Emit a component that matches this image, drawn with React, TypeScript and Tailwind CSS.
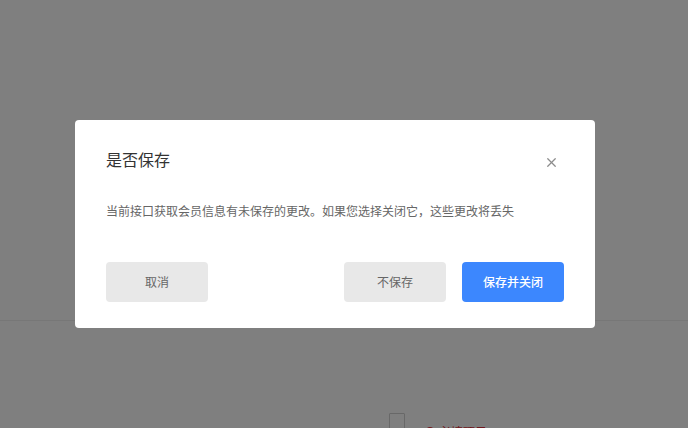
import { X } from "lucide-react";

const font = { fontFamily: '"Noto Sans CJK SC", "Noto Sans", sans-serif' };

const SaveDialog = () => {
  return (
    <div className="w-[520px] rounded-[4px] bg-white px-[31px] pt-[25px] pb-[26px]">
      {/* Header */}
      <div className="flex items-center justify-between">
        <h2 className="text-[16px] leading-[28px] text-[#333333]">是否保存</h2>
        <button className="mt-[6px] mr-[5px] flex h-[15px] w-[15px] items-center justify-center text-[#8c8c8c]">
          <X className="h-[15px] w-[15px]" strokeWidth={2} />
        </button>
      </div>

      {/* Body */}
      <p className="mt-[29px] text-[12px] leading-[18px] text-[#666666]">
        当前接口获取会员信息有未保存的更改。如果您选择关闭它，这些更改将丢失
      </p>

      {/* Footer */}
      <div className="mt-[42px] flex items-center justify-between">
        <button className="h-[40px] w-[102px] rounded-[4px] bg-[#e8e8e8] text-[12px] text-[#666666]">
          取消
        </button>
        <div className="flex gap-[16px]">
          <button className="h-[40px] w-[102px] rounded-[4px] bg-[#e8e8e8] text-[12px] text-[#666666]">
            不保存
          </button>
          <button className="h-[40px] w-[102px] rounded-[4px] bg-[#3c87fe] text-[12px] font-medium text-white">
            保存并关闭
          </button>
        </div>
      </div>
    </div>
  );
};

export default function App() {
  return (
    <div className="relative h-[428px] w-[688px] overflow-hidden bg-white" style={font}>
      {/* Page behind the overlay */}
      <div className="flex flex-col">
        <div className="h-[321px] border-b border-[#eeeeee]" />
        <div className="flex items-start pl-[389px] pt-[92px]">
          <div className="h-[16px] w-[16px] rounded-[1px] border border-[#d0d0d0]" />
          <div className="ml-[20px] mt-[10px] flex items-center gap-[4px] text-[12px] text-[#e0303a]">
            <span className="h-[10px] w-[10px] rounded-full bg-[#e0303a]" />
            <span>必填项目</span>
          </div>
        </div>
      </div>

      {/* Overlay */}
      <div className="absolute inset-0 bg-black/50 pl-[75px] pt-[120px]">
        <SaveDialog />
      </div>
    </div>
  );
}
